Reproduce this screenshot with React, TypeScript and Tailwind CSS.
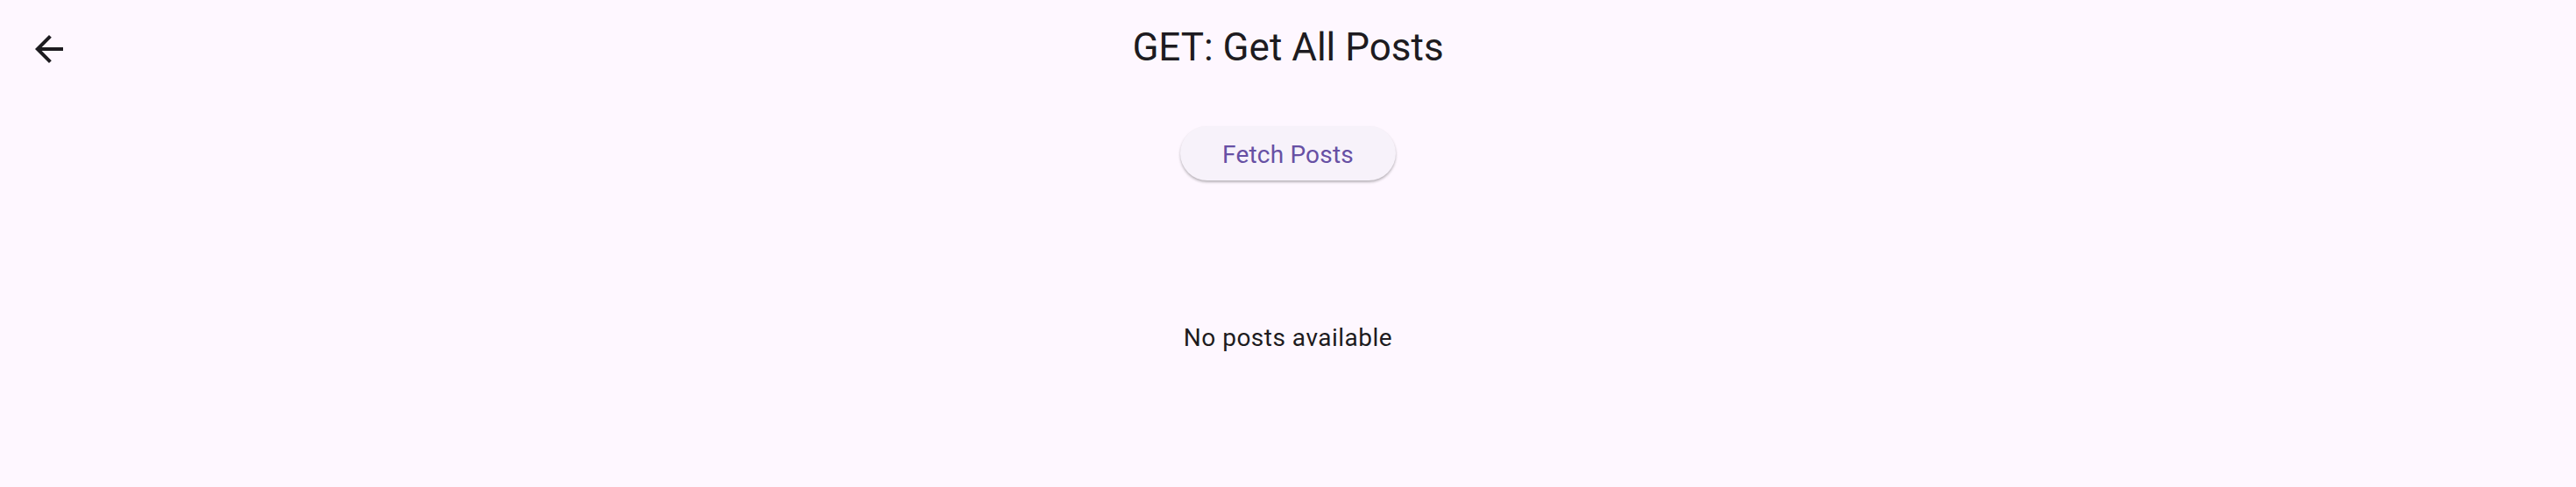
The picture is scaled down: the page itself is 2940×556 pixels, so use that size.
import { useState } from 'react';

export default function App() {
  const [posts] = useState<string[]>([]);

  return (
    <div className="min-h-[556px] w-full bg-[#fef7ff] text-[#1d1b20] font-['Roboto',sans-serif]">
      {/* App bar */}
      <header className="relative flex h-[112px] items-center justify-center">
        <button
          aria-label="Back"
          className="absolute left-[32px] top-[32px] flex h-[48px] w-[48px] items-center justify-center"
        >
          <svg width="48" height="48" viewBox="0 0 24 24" fill="#1d1b20">
            <path d="M20 11H7.83l5.59-5.59L12 4l-8 8 8 8 1.41-1.41L7.83 13H20v-2z" />
          </svg>
        </button>
        <h1 className="pb-[4px] text-[44px] leading-none font-normal">GET: Get All Posts</h1>
      </header>

      <main className="flex flex-col items-center">
        <button className="mt-[32px] flex h-[62px] w-[246px] items-center justify-center rounded-full bg-[#f7f2fa] pt-[3px] text-[28px] leading-none tracking-[0.2px] text-[#6750a4] shadow-[0_2px_3px_rgba(0,0,0,0.28)]">
          Fetch Posts
        </button>

        {posts.length === 0 && (
          <p className="mt-[166px] text-[28px] leading-none tracking-[0.5px]">No posts available</p>
        )}
      </main>
    </div>
  );
}
